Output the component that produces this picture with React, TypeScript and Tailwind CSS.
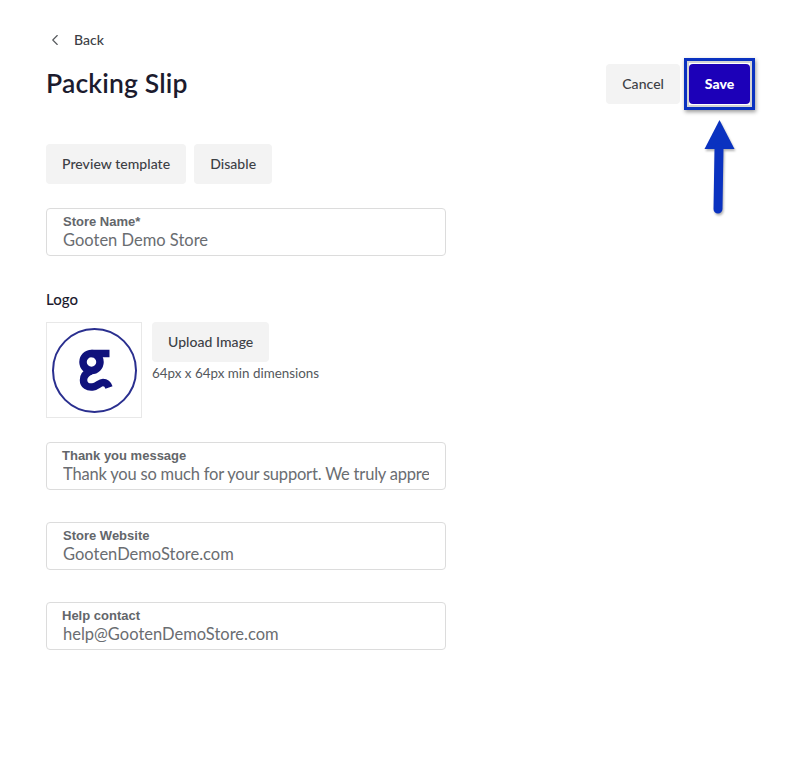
import { ChevronLeft } from "lucide-react";

const avenir = "font-['Lato','Noto_Sans',sans-serif]";

function Field({
  label,
  value,
  labelClass = "pl-4",
  valueClass = "",
}: {
  label: string;
  value: string;
  labelClass?: string;
  valueClass?: string;
}) {
  return (
    <div className="h-12 w-[400px] rounded-[4px] border border-[#dcdcdc] bg-white pt-[5px]">
      <div className={`${labelClass} font-['Liberation_Sans',sans-serif] text-[13px] leading-[16px] font-bold text-[#63666a]`}>
        {label}
      </div>
      <div className={`${valueClass} ml-4 w-[366px] overflow-hidden whitespace-nowrap text-[16.5px] leading-[20px] text-[#6a6d71]`}>
        {value}
      </div>
    </div>
  );
}

function GrayButton({ children }: { children: string }) {
  return (
    <button className="h-10 rounded-[4px] bg-[#f3f3f3] px-4 pb-[2px] text-[14px] font-medium tracking-[0.05px] text-[#3c4045]">
      {children}
    </button>
  );
}

function SaveArrow() {
  return (
    <svg className="absolute left-[700px] top-[118px] drop-shadow-[1px_2px_1px_rgba(0,0,0,0.3)]" width="38" height="100" viewBox="0 0 38 100">
      <path d="M19.5 2 L34.5 31 L4.5 31 Z" fill="#0a32c0" />
      <path d="M19 30 L18 91" stroke="#0a32c0" strokeWidth="9" strokeLinecap="round" fill="none" />
    </svg>
  );
}

export default function App() {
  return (
    <div className={`${avenir} relative min-h-[759px] w-[792px] bg-white pl-[46px] pt-[30px]`}>
      {/* Back link */}
      <div className="flex h-5 items-center text-[14px] font-medium text-[#3c4045]">
        <ChevronLeft className="h-[22px] w-[18px] text-[#55585c]" strokeWidth={1.5} />
        <span className="mb-[2px] ml-[10px]">Back</span>
      </div>

      {/* Title and actions */}
      <div className="mt-[14px] flex h-10 w-[704px] items-center justify-between">
        <h1 className="pb-[2px] text-[26.5px] leading-10 font-semibold tracking-[0.15px] text-[#1c1b2e]">Packing Slip</h1>
        <div className="flex items-center gap-[9px]">
          <GrayButton>Cancel</GrayButton>
          <div className="relative">
            <button className="h-10 w-[61px] rounded-[4px] bg-[#1c00b8] pb-[2px] text-[14px] font-black text-white">Save</button>
            <div className="absolute -inset-x-[5px] -top-[6px] -bottom-[6px] border-[3px] border-[#0a32c0] shadow-[1px_2px_4px_rgba(0,0,0,0.4),inset_0_0_0_2px_#d4d4d4]" />
          </div>
        </div>
      </div>

      <div className="mt-10 flex gap-2">
        <GrayButton>Preview template</GrayButton>
        <GrayButton>Disable</GrayButton>
      </div>

      <div className="mt-6">
        <Field label="Store Name*" value="Gooten Demo Store" />
      </div>

      <div className="mt-[34px] pb-[2px] text-[15px] leading-[18px] font-medium text-[#1c1b2e]">Logo</div>

      <div className="mt-3 flex gap-[10px]">
        <div className="flex h-24 w-24 items-center justify-center border border-[#e8e8e8]">
          <svg width="86" height="86" viewBox="0 0 86 86">
            <circle cx="43.5" cy="43.5" r="41.5" fill="none" stroke="#2a2f8f" strokeWidth="2" />
            <g fill="none" stroke="#10127c" strokeWidth="7.5">
              <circle cx="40.5" cy="35" r="8.5" />
              <path d="M40.5 26.5 H58.5" />
              <path d="M40 44 C35 46 32.5 49 32.5 53 C32.5 58.5 37 60.5 41.5 60 C46.5 59.5 48.5 55.5 52 55.5 C55 55.5 57 57.5 58 60.5" />
            </g>
          </svg>
        </div>
        <div>
          <GrayButton>Upload Image</GrayButton>
          <div className="mt-[3px] text-[13.4px] leading-[17px] text-[#55585c]">64px x 64px min dimensions</div>
        </div>
      </div>

      <div className="mt-6">
        <Field
          labelClass="pl-[15px]"
          valueClass="tracking-[-0.2px]"
          label="Thank you message"
          value="Thank you so much for your support. We truly appreciate your business."
        />
      </div>
      <div className="mt-8">
        <Field label="Store Website" value="GootenDemoStore.com" />
      </div>
      <div className="mt-8">
        <Field labelClass="pl-[15px]" label="Help contact" value="help@GootenDemoStore.com" />
      </div>

      <SaveArrow />
    </div>
  );
}
